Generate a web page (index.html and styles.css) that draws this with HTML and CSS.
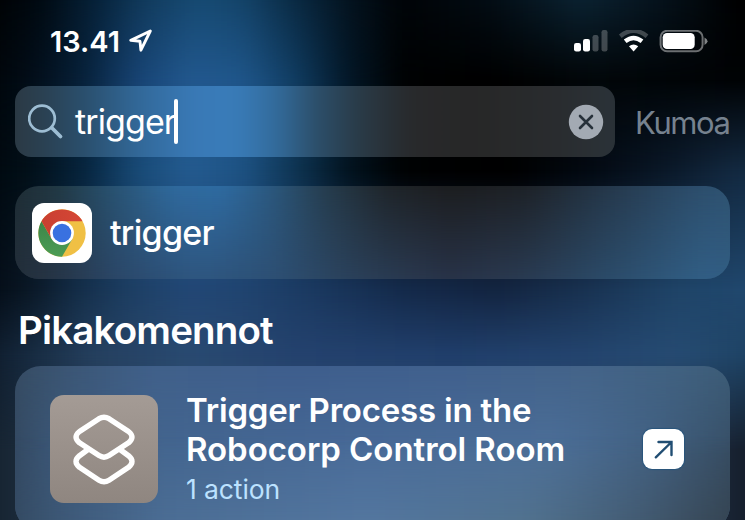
FILE: index.html
```
<!DOCTYPE html>
<html lang="fi">
<head>
<meta charset="utf-8">
<title>trigger</title>
<link rel="stylesheet" href="styles.css">
</head>
<body>
<div class="wall w0"></div><div class="wall w1"></div><div class="wall w2"></div><div class="wall w3"></div><div class="wall w4"></div><div class="wall w5"></div>
<main class="screen">
  <header class="status">
    <span class="time">13.41</span>
    <svg class="loc" width="24" height="24" viewBox="0 0 24 24"><path d="M21.3 2 1.8 11.4 11 12.3 11.9 21.2Z" fill="none" stroke="#fff" stroke-width="2.9" stroke-linejoin="round"/></svg>
    <svg class="signals" width="134" height="24" viewBox="0 0 134 24">
      <g fill="#fff"><rect x="0" y="13" width="7" height="8.500" rx="2.2"/><rect x="9" y="9" width="7" height="12.500" rx="2.2"/></g>
      <g fill="#fff" fill-opacity=".24"><rect x="18.500" y="5" width="6" height="16.500" rx="2.2"/><rect x="27.500" y="0" width="6" height="21.500" rx="2.200"/></g>
      <path d="M46.300 6.200Q59.500-4.500 73 6.200" fill="none" stroke="#fff" stroke-opacity=".24" stroke-width="4.400"/>
      <path d="M51.200 11.300Q59.500 4.700 68 11.300" fill="none" stroke="#fff" stroke-width="4.400"/>
      <path d="M55 16.300Q59.500 12.600 64.200 16.300L59.600 21.500Z" fill="#fff"/>
      <rect x="86.600" y="0.800" width="42" height="20.500" rx="6.500" fill="none" stroke="#fff" stroke-opacity=".42" stroke-width="2"/>
      <rect x="88.700" y="3" width="32" height="16" rx="4.300" fill="#fff"/>
      <path d="M130.500 7.500q3 1.500 3 3.700t-3 3.700Z" fill="#fff" fill-opacity=".5"/>
    </svg>
  </header>
  <div class="searchrow">
    <div class="search">
      <div class="shade"></div>
      <svg width="36" height="36" viewBox="0 0 36 36" fill="none" stroke="#9dbdd3" stroke-linecap="round"><circle cx="14" cy="14.500" r="12.800" stroke-width="2.700"/><path d="M24 24l8.500 8.500" stroke-width="3.800"/></svg>
      <span class="query">trigger</span><i class="caret"></i>
      <svg class="clear" width="36" height="36" viewBox="0 0 36 36"><circle cx="18" cy="18" r="17.200" fill="#a3aab3"/><path d="M12 12l12 12M24 12L12 24" stroke="#27313a" stroke-width="2.600" stroke-linecap="round"/></svg>
    </div>
    <span class="cancel">Kumoa</span>
  </div>
  <div class="card result">
    <div class="shade"></div><div class="shade low"></div>
    <svg class="chrome" width="60" height="60" viewBox="0 0 60 60">
      <defs>
        <linearGradient id="r" x2="1"><stop stop-color="#c93f31"/><stop offset="1" stop-color="#d54735"/></linearGradient>
        <linearGradient id="g" y2="1" x2="0"><stop stop-color="#3c8549"/><stop offset="1" stop-color="#4c9c54"/></linearGradient>
      </defs>
      <rect width="60" height="60" rx="12" fill="#fff"/>
      <circle cx="30" cy="30" r="23.700" fill="#f0c044"/>
      <path d="M9.500 18.200L19.700 36 30 42l10.300-6L30 53.700A23.700 23.700 0 0 1 9.500 18.200Z" fill="url(#g)"/>
      <path d="M30 18.200H50.500A23.700 23.700 0 0 0 9.500 18.200L19.700 36Z" fill="url(#r)"/>
      <circle cx="30" cy="30" r="11.900" fill="#fff"/><circle cx="30" cy="30" r="9.300" fill="#3971e0"/>
    </svg>
    <span class="name">trigger</span>
  </div>
  <h2>Pikakomennot</h2>
  <div class="card shortcut">
    <div class="shade"></div><div class="shade mid"></div><div class="shade low"></div>
    <div class="tile">
      <svg width="108" height="108" viewBox="0 0 108 108" fill="none" stroke="#fff" stroke-width="5.400" stroke-linejoin="round">
        <path d="M49 23.700Q54 20.800 59 23.700L78.500 36.500Q85.500 42 78.500 47.800L59 60.600Q54 63.800 49 60.600L29.500 47.800Q22.500 42 29.500 36.500Z"/>
        <path d="M38 54.500L29.500 60.700Q22.500 66.500 29.500 72.300L49 85.200Q54 88.400 59 85.200L78.500 72.300Q85.500 66.500 78.500 60.700L70 54.500"/>
      </svg>
    </div>
    <div class="copy"><div class="title">Trigger Process in the</div><div class="title second">Robocorp Control Room</div><div class="sub">1 action</div></div>
    <div class="open"><svg width="41" height="40" viewBox="0 0 41 40" fill="none" stroke="#214e73" stroke-width="2.400"><path d="M15.500 13H28.500V26M28.500 13L12.800 28.300" stroke-linecap="round"/></svg></div>
  </div>
</main>
</body>
</html>
```
FILE: styles.css
```
* { box-sizing: border-box; }
body { margin: 0; height: 520px; overflow: hidden; position: relative; background: #000; color: #fff; font-family: Inter, "Liberation Sans", sans-serif; }

/* Wallpaper: horizontal colour bands that fade into one another vertically */
.wall, .shade { position: absolute; inset: -30px 0; transform: scaleX(1.06); filter: blur(10px); }
.w0 { background: linear-gradient(90deg, #000 0, #010a12 60px, #062138 110px, #123c5f 160px, #174b74 210px, #14446a 250px, #0a2a43 300px, #04131f 350px, #010407 400px, #030c13 480px, #0b2231 570px, #06131d 640px, #000 720px); }
.w1 { background: linear-gradient(90deg, #000305 0, #020d18 50px, #07213a 100px, #174373 150px, #22588e 200px, #1f568a 250px, #103c61 300px, #031727 350px, #000203 400px, #000 480px, #02070a 580px, #000204 745px); mask-image: linear-gradient(transparent 30px, #000 110px); }
.w2 { background: linear-gradient(90deg, #00060b 0, #021019 50px, #06243d 100px, #184a76 150px, #245b90 200px, #1d5283 250px, #0e3452 300px, #02131f 350px, #000203 400px, #000 500px, #030a13 580px, #0a1828 650px, #12283f 710px, #122b43 745px); mask-image: linear-gradient(transparent 110px, #000 200px); }
.w3 { background: linear-gradient(90deg, #020912 0, #0a1826 50px, #15304c 100px, #1e4066 150px, #224775 200px, #204470 250px, #1a385f 320px, #142a4a 400px, #132440 490px, #183150 570px, #1f4468 660px, #20486f 745px); mask-image: linear-gradient(transparent 200px, #000 320px); }
.w4 { background: linear-gradient(90deg, #0c1826 0, #172b41 50px, #25405f 110px, #294a71 200px, #24426e 300px, #203e6b 450px, #23446e 570px, #264b72 660px, #1c4161 745px); mask-image: linear-gradient(transparent 320px, #000 385px); }
.w5 { background: linear-gradient(90deg, #14202c 0, #34506e 200px, #34506e 550px, #141c29 735px); mask-image: linear-gradient(transparent 385px, #000 480px); }

.screen { position: relative; height: 520px; display: flex; flex-direction: column; padding: 0 15px; }
.status { height: 86px; flex: none; display: flex; align-items: flex-start; padding: 30px 22px 0 35px; }
.time { font-size: 29px; line-height: 23px; font-weight: 600; letter-spacing: 0; width: 79px; white-space: nowrap; }
.loc { margin-top: -1px; }
.signals { margin-left: auto; }
.searchrow { display: flex; align-items: center; height: 71px; flex: none; }
.search, .card { position: relative; overflow: hidden; flex: none; display: flex; align-items: center; }
.search > :not(.shade), .card > :not(.shade) { position: relative; }
.search { width: 600px; height: 71px; border-radius: 16px; padding: 0 11px 0 13px; }
.search .shade { background: linear-gradient(90deg, #2c363e 0, #2a3f4f 40px, #2a506f 85px, #32699a 135px, #3979b6 185px, #397cb9 225px, #326a9a 265px, #2c4f6b 300px, #293b48 340px, #28292b 390px, #272727 450px, #292c2f 530px, #2b343b 600px); }
.query { font-size: 34px; line-height: 44px; font-weight: 400; margin-left: 11px; letter-spacing: -.9px; width: 100px; white-space: nowrap; }
.caret { width: 4px; height: 45px; border-radius: 2px; background: #fff; margin-left: -1px; }
.clear { margin-left: auto; }
.cancel { font-size: 31px; line-height: 40px; color: #76828f; margin: 2px 0 0 20px; letter-spacing: -1.400px; white-space: nowrap; }
.result { height: 93px; margin-top: 29px; border-radius: 24px; padding: 0 17px; }
.result .shade { background: linear-gradient(90deg, #1d282e 0, #213843 60px, #28516f 110px, #2f6a9e 170px, #2e6ba2 215px, #2b5980 260px, #263e50 310px, #1f252a 370px, #1c1d1f 430px, #1d2126 500px, #25384b 580px, #2c4d6b 660px, #305675 716px); }
.result .low { background: linear-gradient(90deg, #212a33 0, #263547 60px, #2b486a 120px, #2e5680 190px, #2d5075 260px, #2a4059 340px, #283247 430px, #293a51 500px, #2b4b69 580px, #315e85 670px, #315c80 716px); mask-image: linear-gradient(transparent 30px, #000 123px); }
.name { font-size: 34px; font-weight: 500; margin-left: 18px; letter-spacing: -.7px; }
h2 { font-size: 38.500px; line-height: 48px; font-weight: 600; letter-spacing: -.85px; margin: 27px 0 12px 3px; white-space: nowrap; }
.shortcut { height: 165px; border-radius: 26px; padding: 0 46px 0 35px; }
.shortcut .shade { background: linear-gradient(90deg, #34485c 0, #3b5675 70px, #40608a 150px, #3e5e8d 280px, #40608d 430px, #446489 560px, #406180 650px, #3b5a74 716px); }
.shortcut .mid { background: linear-gradient(90deg, #2f4257 0, #3c5879 60px, #43658f 160px, #486a98 350px, #4c6f99 530px, #426183 620px, #34495d 716px); mask-image: linear-gradient(transparent 30px, #000 120px); }
.shortcut .low { background: linear-gradient(90deg, #30445a 0, #3c5775 60px, #4b6d94 160px, #53769f 350px, #51728f 500px, #445d75 600px, #323f4b 716px); mask-image: linear-gradient(transparent 100px, #000 185px); }
.tile { width: 108px; height: 108px; flex: none; border-radius: 14px; background: linear-gradient(#a49b95, #8f8680); }
.tile svg { display: block; }
.copy { margin: 2px 0 0 28px; white-space: nowrap; }
.title { font-size: 33px; line-height: 39px; font-weight: 600; letter-spacing: -.2px; }
.second { letter-spacing: -.05px; }
.sub { font-size: 26.500px; line-height: 40px; color: #bce2ff; letter-spacing: -.1px; }
.open { margin-left: auto; width: 41px; height: 40px; border-radius: 9px; background: #fff; box-shadow: 0 0 1px 1px #28557c; }
.open svg { display: block; }
```
